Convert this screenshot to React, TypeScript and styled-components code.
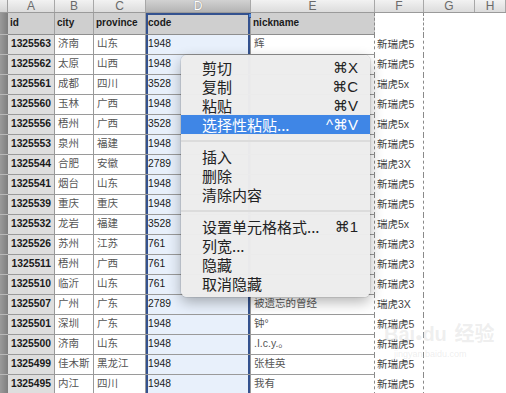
import { styled, createGlobalStyle } from "styled-components";

const GlobalStyle = createGlobalStyle`
  html, body {
    margin: 0;
    padding: 0;
    background: #fff;
    overflow: hidden;
  }
  * {
    box-sizing: border-box;
  }
`;

const COLS = "8px 47px 39px 52px 105px 124px 49px 51px 1fr";

const rows: [string, string, string, string, string, string][] = [
  ["1325563", "济南", "山东", "1948", "辉", "新瑞虎5"],
  ["1325562", "太原", "山西", "1948", "", "新瑞虎5"],
  ["1325561", "成都", "四川", "3528", "", "瑞虎5x"],
  ["1325560", "玉林", "广西", "1948", "", "新瑞虎5"],
  ["1325556", "梧州", "广西", "3528", "", "瑞虎5x"],
  ["1325553", "泉州", "福建", "1948", "", "新瑞虎5"],
  ["1325544", "合肥", "安徽", "2789", "", "瑞虎3X"],
  ["1325541", "烟台", "山东", "1948", "", "新瑞虎5"],
  ["1325539", "重庆", "重庆", "1948", "", "新瑞虎5"],
  ["1325532", "龙岩", "福建", "3528", "", "瑞虎5x"],
  ["1325526", "苏州", "江苏", "761", "", "新瑞虎3"],
  ["1325511", "梧州", "广西", "761", "", "新瑞虎3"],
  ["1325510", "临沂", "山东", "761", "", "新瑞虎3"],
  ["1325507", "广州", "广东", "2789", "被遗忘的曾经", "瑞虎3X"],
  ["1325501", "深圳", "广东", "1948", "钟°", "新瑞虎5"],
  ["1325500", "济南", "山东", "1948", ".I.c.y.。", "新瑞虎5"],
  ["1325499", "佳木斯", "黑龙江", "1948", "张桂英", "新瑞虎5"],
  ["1325495", "内江", "四川", "1948", "我有", "新瑞虎5"],
];

const menu: { label: string; key?: string; active?: boolean; sep?: boolean }[] = [
  { label: "剪切", key: "⌘X" },
  { label: "复制", key: "⌘C" },
  { label: "粘贴", key: "⌘V" },
  { label: "选择性粘贴...", key: "^⌘V", active: true },
  { label: "", sep: true },
  { label: "插入" },
  { label: "删除" },
  { label: "清除内容" },
  { label: "", sep: true },
  { label: "设置单元格格式...", key: "⌘1" },
  { label: "列宽..." },
  { label: "隐藏" },
  { label: "取消隐藏" },
];

function App() {
  return (
    <>
      <GlobalStyle />
      <Sheet>
        <LetterRow>
          <Corner />
          {["A", "B", "C", "D", "E", "F", "G", "H"].map((l) => (
            <Letter key={l} $sel={l === "D"}>
              {l}
            </Letter>
          ))}
        </LetterRow>
        <HeadRow>
          <RowHead />
          <HeadCell>id</HeadCell>
          <HeadCell>city</HeadCell>
          <HeadCell>province</HeadCell>
          <HeadCell $sel>
            code
            <Handle />
          </HeadCell>
          <HeadCell $dash>nickname</HeadCell>
          <Blank $dash />
          <Blank />
          <Blank />
        </HeadRow>
        {rows.map((r) => (
          <DataRow key={r[0]}>
            <RowHead />
            <IdCell>{r[0]}</IdCell>
            <Cell $cjk>{r[1]}</Cell>
            <Cell $cjk>{r[2]}</Cell>
            <Cell $sel>{r[3]}</Cell>
            <Cell $cjk $dash>
              {r[4]}
            </Cell>
            <Plain $dash>{r[5]}</Plain>
            <Plain />
            <Plain />
          </DataRow>
        ))}

        <Menu>
          {menu.map((m, i) =>
            m.sep ? (
              <Sep key={i} />
            ) : (
              <Item key={i} $active={m.active}>
                <span>{m.label}</span>
                {m.key && <Key>{m.key}</Key>}
              </Item>
            )
          )}
        </Menu>

        <Watermark>
          <Brand>
            Bai<Paw>●</Paw>du <span>经验</span>
          </Brand>
          <Url>jingyan.baidu.com</Url>
        </Watermark>
      </Sheet>
    </>
  );
}

export default App;

const Sheet = styled.div`
  position: relative;
  width: 506px;
  height: 393px;
  overflow: hidden;
  font-family: "Liberation Sans", Arial, "Noto Sans CJK SC", sans-serif;
`;

const LetterRow = styled.div`
  display: grid;
  grid-template-columns: ${COLS};
  height: 13px;
  border-bottom: 1px solid #9a9a9a;
`;

const Corner = styled.div`
  background: linear-gradient(#ededed, #d4d4d4);
  border-right: 1px solid #a0a0a0;
`;

const Letter = styled.div<{ $sel?: boolean }>`
  background: ${(p) =>
    p.$sel
      ? "linear-gradient(#d2d2d2, #b4b4b4)"
      : "linear-gradient(#f2f2f2, #dcdcdc)"};
  border-right: 1px solid #a8a8a8;
  color: ${(p) => (p.$sel ? "#fff" : "#6a6a6a")};
  font-size: 12px;
  line-height: 12px;
  text-align: center;
  text-shadow: ${(p) => (p.$sel ? "0 0 1px #666" : "none")};
`;

const HeadRow = styled.div`
  display: grid;
  grid-template-columns: ${COLS};
  height: 22px;
`;

const DataRow = styled.div`
  display: grid;
  grid-template-columns: ${COLS};
  height: 20px;
`;

const RowHead = styled.div`
  background: linear-gradient(90deg, #9a9a9a, #7e7e7e);
  border-bottom: 1px solid #b8b8b8;
`;

const HeadCell = styled.div<{ $sel?: boolean; $dash?: boolean }>`
  position: relative;
  background: #cfcfcf;
  border-right: ${(p) => (p.$dash ? "1px dashed #8a8a8a" : "1px solid #a0a0a0")};
  border-bottom: 1px solid #8e8e8e;
  padding: 3px 0 0 2px;
  font-size: 10px;
  font-weight: bold;
  line-height: 13px;
  color: #1a1a1a;
  box-shadow: ${(p) =>
    p.$sel ? "inset 2px 2px #34528f, inset -2px 0 #34528f" : "none"};
`;

const Handle = styled.div`
  position: absolute;
  right: -3px;
  top: 0;
  width: 5px;
  height: 5px;
  background: #4d86d6;
  border: 1px solid #2a4d8d;
`;

const Blank = styled.div<{ $dash?: boolean }>`
  border-right: ${(p) => (p.$dash ? "1px dashed #8a8a8a" : "none")};
`;

const IdCell = styled.div`
  background: #dedede;
  border-right: 1px solid #9a9a9a;
  border-bottom: 1px solid #9a9a9a;
  padding: 2px 3px 0 0;
  text-align: right;
  font-size: 10.3px;
  font-weight: bold;
  line-height: 14px;
  color: #1a1a1a;
`;

const Cell = styled.div<{ $cjk?: boolean; $sel?: boolean; $dash?: boolean }>`
  background: ${(p) => (p.$sel ? "#e8f0fb" : "#fff")};
  border-right: ${(p) => (p.$dash ? "1px dashed #8a8a8a" : "1px solid #9a9a9a")};
  border-bottom: 1px solid #9a9a9a;
  padding: ${(p) => (p.$cjk ? "1px 0 0 3px" : "2px 0 0 2px")};
  font-size: ${(p) => (p.$cjk ? "10.5px" : "10.3px")};
  line-height: 14px;
  color: ${(p) => (p.$cjk ? "#555" : "#1a1a1a")};
  white-space: nowrap;
  box-shadow: ${(p) =>
    p.$sel ? "inset 2px 0 #34528f, inset -2px 0 #34528f" : "none"};
`;

const Plain = styled.div<{ $dash?: boolean }>`
  border-right: ${(p) => (p.$dash ? "1px dashed #8a8a8a" : "none")};
  padding: 2px 0 0 2px;
  font-size: 10.5px;
  line-height: 14px;
  color: #444;
  white-space: nowrap;
`;

const Menu = styled.div`
  position: absolute;
  left: 181px;
  top: 55px;
  width: 189px;
  padding: 3px 0 4px;
  background: rgba(237, 237, 237, 0.98);
  border-radius: 6px;
  box-shadow: 0 0 0 1px rgba(0, 0, 0, 0.08), 0 5px 14px rgba(0, 0, 0, 0.3);
  font-family: "Noto Sans CJK SC", "Liberation Sans", sans-serif;
`;

const Item = styled.div<{ $active?: boolean }>`
  display: flex;
  justify-content: space-between;
  align-items: center;
  height: 19px;
  padding: 0 12px 0 21px;
  font-size: 15px;
  color: ${(p) => (p.$active ? "#fff" : "#222")};
  background: ${(p) => (p.$active ? "#3f86e6" : "transparent")};
`;

const Key = styled.span`
  font-family: "Liberation Sans", "DejaVu Sans", sans-serif;
  font-size: 15px;
`;

const Sep = styled.div`
  height: 13px;
  display: flex;
  align-items: center;
  &::after {
    content: "";
    flex: 1;
    height: 2px;
    background: #dcdcdc;
  }
`;

const Watermark = styled.div`
  position: absolute;
  left: 384px;
  top: 322px;
  display: flex;
  flex-direction: column;
  color: rgba(200, 200, 200, 0.3);
  pointer-events: none;
`;

const Brand = styled.div`
  font-size: 20px;
  font-weight: bold;
  line-height: 24px;
  white-space: nowrap;
  span {
    margin-left: 2px;
  }
`;

const Url = styled.div`
  font-size: 9px;
  line-height: 10px;
  padding-left: 10px;
`;

const Paw = styled.i`
  font-style: normal;
  font-size: 12px;
`;
